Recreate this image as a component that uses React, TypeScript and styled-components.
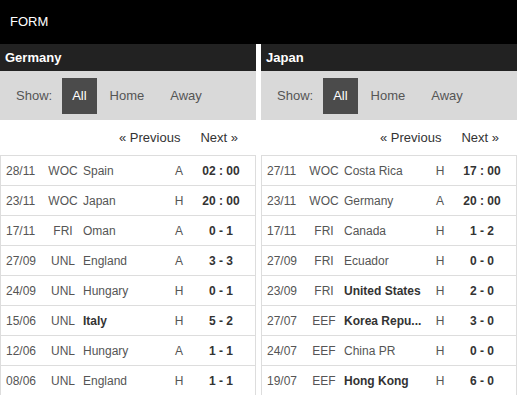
import styled, { createGlobalStyle } from "styled-components";

const GlobalStyle = createGlobalStyle`
    html, body {
        margin: 0;
        padding: 0;
        background: #fff;
        font-family: "Liberation Sans", Arial, sans-serif;
    }
`;

type Match = {
    date: string;
    comp: string;
    team: string;
    strong?: boolean;
    side: string;
    score: string;
};

const germany: Match[] = [
    { date: "28/11", comp: "WOC", team: "Spain", side: "A", score: "02 : 00" },
    { date: "23/11", comp: "WOC", team: "Japan", side: "H", score: "20 : 00" },
    { date: "17/11", comp: "FRI", team: "Oman", side: "A", score: "0 - 1" },
    { date: "27/09", comp: "UNL", team: "England", side: "A", score: "3 - 3" },
    { date: "24/09", comp: "UNL", team: "Hungary", side: "H", score: "0 - 1" },
    { date: "15/06", comp: "UNL", team: "Italy", strong: true, side: "H", score: "5 - 2" },
    { date: "12/06", comp: "UNL", team: "Hungary", side: "A", score: "1 - 1" },
    { date: "08/06", comp: "UNL", team: "England", side: "H", score: "1 - 1" },
];

const japan: Match[] = [
    { date: "27/11", comp: "WOC", team: "Costa Rica", side: "H", score: "17 : 00" },
    { date: "23/11", comp: "WOC", team: "Germany", side: "A", score: "20 : 00" },
    { date: "17/11", comp: "FRI", team: "Canada", side: "H", score: "1 - 2" },
    { date: "27/09", comp: "FRI", team: "Ecuador", side: "H", score: "0 - 0" },
    { date: "23/09", comp: "FRI", team: "United States", strong: true, side: "H", score: "2 - 0" },
    { date: "27/07", comp: "EEF", team: "Korea Repu...", strong: true, side: "H", score: "3 - 0" },
    { date: "24/07", comp: "EEF", team: "China PR", side: "H", score: "0 - 0" },
    { date: "19/07", comp: "EEF", team: "Hong Kong", strong: true, side: "H", score: "6 - 0" },
];

const Page = styled.div`
    width: 517px;
    overflow: hidden;
`;

const Header = styled.div`
    height: 44px;
    background: #000;
    color: #fff;
    font-size: 13px;
    display: flex;
    align-items: center;
    padding-left: 10px;
    padding-bottom: 2px;
    box-sizing: border-box;
`;

const Columns = styled.div`
    display: grid;
    grid-template-columns: 256px 256px;
    column-gap: 5px;
`;

const Panel = styled.div`
    display: flex;
    flex-direction: column;
`;

const TeamBar = styled.div`
    height: 27px;
    background: #222;
    color: #fff;
    font-weight: bold;
    font-size: 13px;
    display: flex;
    align-items: center;
    padding-left: 5px;
`;

const FilterBar = styled.div`
    height: 49px;
    background: #d9d9d9;
    display: flex;
    align-items: center;
    padding-left: 16px;
    font-size: 13px;
    color: #555;
`;

const FilterLabel = styled.span`
    margin-right: 10px;
`;

const FilterButton = styled.span<{ $active?: boolean }>`
    height: 36px;
    padding: 0 ${(p) => (p.$active ? "10px" : "13px")};
    display: flex;
    align-items: center;
    background: ${(p) => (p.$active ? "#4b4b4b" : "transparent")};
    color: ${(p) => (p.$active ? "#fff" : "#555")};
`;

const Pager = styled.div`
    height: 35px;
    display: flex;
    align-items: center;
    justify-content: flex-end;
    gap: 20px;
    padding-right: 18px;
    font-size: 13px;
    color: #333;
`;

const Table = styled.div`
    border: 1px solid #ddd;
    border-bottom: none;
`;

const Row = styled.div`
    display: grid;
    grid-template-columns: 37px 40px 1fr 28px 56px;
    height: 29px;
    align-items: center;
    padding: 0 6px 0 5px;
    border-bottom: 1px solid #ddd;
    font-size: 12px;
    color: #555;
`;

const Cell = styled.span<{ $center?: boolean; $strong?: boolean }>`
    text-align: ${(p) => (p.$center ? "center" : "left")};
    font-weight: ${(p) => (p.$strong ? "bold" : "normal")};
    color: ${(p) => (p.$strong ? "#333" : "inherit")};
    white-space: nowrap;
`;

const FormPanel = ({ name, matches }: { name: string; matches: Match[] }) => (
    <Panel>
        <TeamBar>{name}</TeamBar>
        <FilterBar>
            <FilterLabel>Show:</FilterLabel>
            <FilterButton $active>All</FilterButton>
            <FilterButton>Home</FilterButton>
            <FilterButton>Away</FilterButton>
        </FilterBar>
        <Pager>
            <span>« Previous</span>
            <span>Next »</span>
        </Pager>
        <Table>
            {matches.map((m) => (
                <Row key={m.date + m.team}>
                    <Cell>{m.date}</Cell>
                    <Cell $center>{m.comp}</Cell>
                    <Cell $strong={m.strong}>{m.team}</Cell>
                    <Cell $center>{m.side}</Cell>
                    <Cell $center $strong>{m.score}</Cell>
                </Row>
            ))}
        </Table>
    </Panel>
);

const App = () => (
    <Page>
        <GlobalStyle />
        <Header>FORM</Header>
        <Columns>
            <FormPanel name="Germany" matches={germany} />
            <FormPanel name="Japan" matches={japan} />
        </Columns>
    </Page>
);

export default App;
